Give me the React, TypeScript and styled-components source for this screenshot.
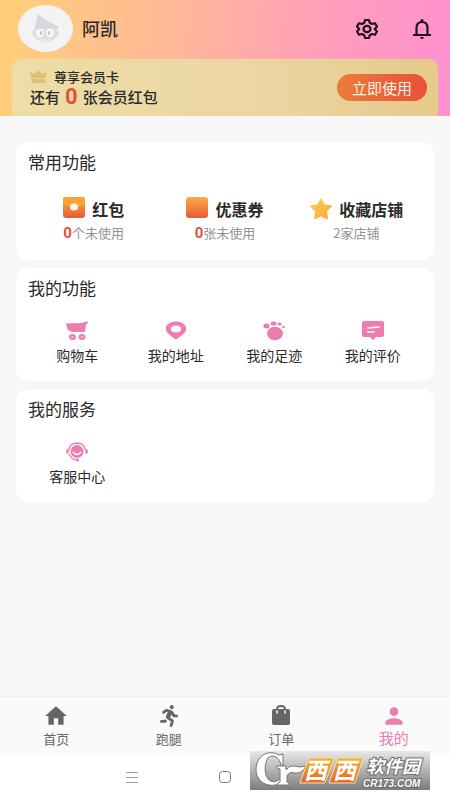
import React from "react";
import styled, { createGlobalStyle } from "styled-components";
import { MdHome, MdPerson } from "react-icons/md";
import { FaRunning } from "react-icons/fa";

const GlobalStyle = createGlobalStyle`
  * { box-sizing: border-box; }
  body {
    margin: 0;
    background: #fff;
    color: #2a2a2a;
    font-family: "Noto Sans CJK SC", sans-serif;
  }
  button { font: inherit; color: inherit; border: 0; padding: 0; background: none; cursor: pointer; }
  a { color: inherit; text-decoration: none; }
  h1, h2, p { margin: 0; font-weight: 400; }
  svg { display: block; flex: none; }
`;

const Page = styled.div`
  min-height: 100vh;
  display: flex;
  flex-direction: column;
  background: #f7f7f7;
`;

const Header = styled.header`
  padding: 0 12px;
  background: linear-gradient(97deg, #ffd078 0%, #ffb59b 42%, #ff9fba 70%, #ff90d0 100%);
`;

const Profile = styled.div`
  display: flex;
  align-items: center;
  height: 59px;
  padding: 0 6px 2px;
`;

const Avatar = styled.div`
  width: 55px;
  height: 47px;
  border-radius: 50%;
  background: #f3f2f4;
  display: flex;
  align-items: center;
  justify-content: center;
`;

const UserName = styled.h1`
  flex: 1;
  margin-left: 9px;
  padding-bottom: 2px;
  font-size: 18px;
  line-height: 24px;
  font-weight: 500;
`;

const HeaderActions = styled.div`
  display: flex;
  gap: 33px;
  color: #21111a;
`;

const MemberCard = styled.section`
  display: flex;
  align-items: center;
  justify-content: space-between;
  height: 57px;
  padding: 0 11px 0 18px;
  border-radius: 9px 9px 0 0;
  background: linear-gradient(90deg, #eddda6, #ecd6a4 55%, #e5ca8b);
`;

const MemberTitle = styled.p`
  display: flex;
  align-items: center;
  gap: 7px;
  font-size: 13px;
  line-height: 18px;
  font-weight: 500;
`;

const MemberText = styled.p`
  display: flex;
  align-items: center;
  gap: 5px;
  font-size: 15px;
  line-height: 22px;
  font-weight: 500;
`;

const Count = styled.strong<{ $size: number }>`
  color: #e2533b;
  font-family: Roboto, sans-serif;
  font-weight: 700;
  font-size: ${(p) => p.$size}px;
`;

const UseButton = styled.button`
  width: 90px;
  height: 27px;
  border-radius: 14px;
  background: linear-gradient(90deg, #e97c38, #e9503a);
  color: #fff3e6;
  font-size: 15px;
  line-height: 26px;
`;

const Main = styled.main`
  flex: 1;
  display: flex;
  flex-direction: column;
  gap: 8px;
  padding: 26px 16px;
`;

const Panel = styled.section`
  padding: 7px 12px 16px;
  border-radius: 12px;
  background: #fff;
`;

const PanelTitle = styled.h2`
  font-size: 17px;
  line-height: 26px;
`;

const AssetGrid = styled.div`
  display: grid;
  grid-template-columns: repeat(3, minmax(0, 132px));
  justify-content: center;
  padding: 19px 0 1px;
`;

const Asset = styled.button`
  display: flex;
  flex-direction: column;
  align-items: center;
`;

const AssetName = styled.span`
  display: flex;
  align-items: center;
  gap: 6px;
  height: 29px;
  font-size: 16px;
  font-weight: 700;
`;

const AssetNote = styled.span`
  display: flex;
  align-items: center;
  color: #929292;
  font-size: 13px;
  line-height: 20px;
`;

const ToolGrid = styled.div`
  display: grid;
  grid-template-columns: repeat(4, 1fr);
  padding-top: 19px;
`;

const Tool = styled.button`
  display: flex;
  flex-direction: column;
  align-items: center;
  gap: 3px;
  font-size: 14px;
  line-height: 20px;
`;

const TabBar = styled.nav`
  display: grid;
  grid-template-columns: repeat(4, 1fr);
  height: 58px;
  border-top: 1px solid #eee;
  background: #fafafa;
`;

const Tab = styled.a<{ $active?: boolean }>`
  display: flex;
  flex-direction: column;
  align-items: center;
  padding-top: 6px;
  color: ${(p) => (p.$active ? "#e87fb2" : "#666")};
  font-size: ${(p) => (p.$active ? 15 : 13)}px;
  line-height: ${(p) => (p.$active ? 18 : 20)}px;
`;

const TabIcon = styled.span`
  display: grid;
  place-items: center;
  height: 26px;
`;

const SystemBar = styled.footer`
  position: relative;
  display: flex;
  align-items: center;
  justify-content: center;
  gap: 79px;
  height: 46px;
  padding-right: 94px;
  background: #fff;
  color: #888;
`;

const Watermark = styled.div`
  position: absolute;
  right: 20px;
  bottom: 10px;
`;

const AvatarArt = () => (
  <svg width="34" height="34" viewBox="0 0 34 34">
    <path d="M5 19 9 2c4 3 8 7 21 13l-3 4q-10-5-22 0Z" fill="#d7d8dc" />
    <path d="M5 19q-3-1-2 3 1 3 3 3c2 6 17 7 21 0q3 0 3-4 0-3-3-2-11-6-22 0Z" fill="#dddee2" />
    <ellipse cx="11" cy="21" rx="4" ry="4.500" fill="#f7f7f8" />
    <ellipse cx="21" cy="21" rx="4" ry="4.500" fill="#f7f7f8" />
    <ellipse cx="12" cy="21" rx="1.300" ry="2" fill="#c6c7cc" />
    <ellipse cx="20" cy="21" rx="1.300" ry="2" fill="#c6c7cc" />
    <path d="M10 26q6 3 12 0l-2 4q-4 2-8 0Z" fill="#efe5e6" />
  </svg>
);

const GearIcon = () => (
  <svg width="24" height="22" viewBox="0 0 24 22" fill="none" stroke="currentColor" strokeWidth="2.200" strokeLinejoin="round">
    <path d="M10 2h4l.7 2.800 2.300 1.200 3-.8 2 3.300L19.800 11l2.200 2.500-2 3.300-3-.8-2.300 1.200L14 20h-4l-.7-2.800L7 16l-3 .8-2-3.300L4.200 11 2 8.500l2-3.300 3 .8 2.300-1.200Z" />
    <ellipse cx="12" cy="11" rx="3.500" ry="3.200" />
  </svg>
);

const BellIcon = () => (
  <svg width="20" height="22" viewBox="0 0 20 22">
    <path d="M4.500 17V10q0-6 5.500-6t5.500 6v7M1 17h18" fill="none" stroke="currentColor" strokeWidth="2.200" />
    <path d="M8.500 3.500V2q1.500-2 3 0v1.500ZM8 19h4q-.5 2-2 2t-2-2" fill="currentColor" />
  </svg>
);

const CrownIcon = () => (
  <svg width="17" height="15" viewBox="0 0 17 15" fill="#dfc071">
    <path d="M0 3 5 5 8.500 1 12 5l5-2-1.500 6h-14ZM1.500 10h14l-.5 4H2Z" />
  </svg>
);

const PacketIcon = ({ dot }: { dot?: boolean }) => (
  <svg width="23" height="23" viewBox="0 0 23 23">
    <defs>
      <linearGradient id="packet" x2="0" y2="1">
        <stop stopColor="#faae45" />
        <stop offset="1" stopColor="#ea5936" />
      </linearGradient>
    </defs>
    <rect width="22" height="21" rx="3" fill="url(#packet)" />
    {dot && <path d="M0 7V3q0-3 3-3h16q3 0 3 3v4q-11 7-22 0" fill="#f9a334" />}
    {dot && <ellipse cx="11" cy="10" rx="4" ry="3.500" fill="#fff6e8" />}
  </svg>
);

const StarIcon = () => (
  <svg width="24" height="24" viewBox="0 0 24 24">
    <defs>
      <linearGradient id="star" x2="1" y2="1">
        <stop stopColor="#ffd25c" />
        <stop offset="1" stopColor="#f8a532" />
      </linearGradient>
    </defs>
    <path d="m12 2 3.200 6 7 1-5 5.300 1 7.200-6.200-3-6.200 3 1-7.200-5-5.300 7-1Z" fill="url(#star)" stroke="url(#star)" strokeWidth="1.500" strokeLinejoin="round" />
  </svg>
);

const pink = "#ed7db0";

const CartIcon = () => (
  <svg width="24" height="22" viewBox="0 0 24 22">
    <path d="M1 3.500 18 3q1-1.500 5-1.500V3l-2 1-1 8H8Q3 11 2 8Z" fill={pink} />
    <g fill="#f5bad5" stroke={pink} strokeWidth="2">
      <ellipse cx="7.500" cy="17" rx="2.500" ry="2" />
      <ellipse cx="17" cy="17" rx="2.500" ry="2" />
    </g>
  </svg>
);

const PlaceIcon = () => (
  <svg width="24" height="22" viewBox="0 0 24 22">
    <path fillRule="evenodd" d="M12 1.500c7 0 11 4 10 8-1 5-6 7-10 10-4-3-9-5-10-10-1-4 3-8 10-8Zm0 4c-3 0-5 1.500-5 3.500S9 12.500 12 12.500s5-1.500 5-3.500S15 5.500 12 5.500Z" fill={pink} />
  </svg>
);

const PawIcon = () => (
  <svg width="24" height="22" viewBox="0 0 24 22" fill={pink}>
    <ellipse cx="13" cy="13.500" rx="8" ry="6.700" />
    <ellipse cx="4.500" cy="6" rx="3.200" ry="2.500" />
    <ellipse cx="11.500" cy="3.500" rx="3" ry="2" />
    <ellipse cx="17.500" cy="4" rx="2.200" ry="1.500" />
    <circle cx="21.500" cy="7" r="1.300" />
  </svg>
);

const CommentIcon = () => (
  <svg width="24" height="22" viewBox="0 0 24 22">
    <path d="M3 1h18q2 0 2 2v12q0 2-2 2h-6l-3 3-3-3H3q-2 0-2-2V3q0-2 2-2Z" fill={pink} />
    <path d="m7 8 11-1M7 12h6" stroke="#fff" strokeWidth="1.700" strokeLinecap="round" />
  </svg>
);

const ServiceIcon = () => (
  <svg width="24" height="22" viewBox="0 0 24 22" fill="none" stroke={pink}>
    <circle cx="12" cy="10.500" r="6.500" fill={pink} stroke="none" />
    <path d="M3.500 9Q5 2 12 2t8.500 7M4 13q3 6 8 6" strokeWidth="1.300" />
    <path d="M2.500 9.500v2m19-2v2" strokeWidth="2.500" strokeLinecap="round" />
    <path d="M8 11q4 5 8 0" stroke="#fff" strokeWidth="1.300" />
    <circle cx="12.500" cy="19" r="1.500" fill={pink} stroke="none" />
  </svg>
);

const BagIcon = () => (
  <svg width="24" height="26" viewBox="0 0 24 26">
    <path d="M8 8V6q0-3 4-3t4 3v2" fill="none" stroke="currentColor" strokeWidth="2" />
    <rect x="3" y="6" width="18" height="16" rx="2" fill="currentColor" />
    <path d="M8 8v2m8-2v2" stroke="#fafafa" strokeWidth="1.500" strokeLinecap="round" />
  </svg>
);

const MenuIcon = () => (
  <svg width="14" height="14" viewBox="0 0 14 14" stroke="#999">
    <path d="M1 2.500h12M1 7.500h12M1 12.500h12" />
  </svg>
);

const SquareIcon = () => (
  <svg width="14" height="14" viewBox="0 0 14 14" fill="none" stroke="#777">
    <rect x="1.500" y="1.500" width="11" height="11" rx="3" />
  </svg>
);

const SiteLogo = () => (
  <svg width="180" height="39" viewBox="0 0 180 39" role="img" aria-label="西西软件园 CR173.COM">
    <defs>
      <linearGradient id="plate" x2="0" y2="1">
        <stop stopColor="#e8e8e8" />
        <stop offset="1" stopColor="#7c7c7c" />
      </linearGradient>
      <linearGradient id="tile" x2="0" y2="1">
        <stop stopColor="#f6b026" />
        <stop offset="1" stopColor="#e86525" />
      </linearGradient>
    </defs>
    <rect width="180" height="39" fill="url(#plate)" />
    <g fill="#fff" stroke="#777" strokeWidth="1" strokeLinejoin="round">
      <path d="M33 3v11h-2C29 5 22 3 18 7c-4 6-4 17 1 22 4 3 8 2 12-2l3 2C27 38 7 36 6 19 6 4 19-2 29 4Z" />
      <path d="M27 15h9v4q3-5 8-4 5 2 12 0-4 8-11 7-6-2-8 3v6l3 2v1H27v-1l3-2V18l-3-1Z" />
    </g>
    <path d="M59 7h25l-9 25H50ZM88 7h25l-8 25H79Z" fill="url(#tile)" stroke="#f9dfb0" />
    <g fontFamily="Noto Sans CJK SC, sans-serif" fontWeight="700" fontStyle="italic" fill="#fff">
      <text x="54" y="28" fontSize="23">西</text>
      <text x="83" y="28" fontSize="23">西</text>
      <g stroke="#6c6c6c" strokeWidth="2" paintOrder="stroke">
        <text x="116" y="22" fontSize="18">软件园</text>
        <text x="113" y="36" fontSize="10" fontFamily="Liberation Sans, sans-serif">CR173.COM</text>
      </g>
    </g>
  </svg>
);

const tools = [
  { name: "购物车", icon: <CartIcon /> },
  { name: "我的地址", icon: <PlaceIcon /> },
  { name: "我的足迹", icon: <PawIcon /> },
  { name: "我的评价", icon: <CommentIcon /> },
];

export default function App() {
  return (
    <Page>
      <GlobalStyle />
      <Header>
        <Profile>
          <Avatar><AvatarArt /></Avatar>
          <UserName>阿凯</UserName>
          <HeaderActions>
            <button aria-label="设置"><GearIcon /></button>
            <button aria-label="通知"><BellIcon /></button>
          </HeaderActions>
        </Profile>
        <MemberCard>
          <div>
            <MemberTitle><CrownIcon />尊享会员卡</MemberTitle>
            <MemberText>还有<Count $size={22}>0</Count>张会员红包</MemberText>
          </div>
          <UseButton>立即使用</UseButton>
        </MemberCard>
      </Header>
      <Main>
        <Panel>
          <PanelTitle>常用功能</PanelTitle>
          <AssetGrid>
            <Asset>
              <AssetName><PacketIcon dot />红包</AssetName>
              <AssetNote><Count $size={15}>0</Count>个未使用</AssetNote>
            </Asset>
            <Asset>
              <AssetName><PacketIcon />优惠券</AssetName>
              <AssetNote><Count $size={15}>0</Count>张未使用</AssetNote>
            </Asset>
            <Asset>
              <AssetName><StarIcon />收藏店铺</AssetName>
              <AssetNote>2家店铺</AssetNote>
            </Asset>
          </AssetGrid>
        </Panel>
        <Panel>
          <PanelTitle>我的功能</PanelTitle>
          <ToolGrid>
            {tools.map((t) => <Tool key={t.name}>{t.icon}{t.name}</Tool>)}
          </ToolGrid>
        </Panel>
        <Panel>
          <PanelTitle>我的服务</PanelTitle>
          <ToolGrid>
            <Tool><ServiceIcon />客服中心</Tool>
          </ToolGrid>
        </Panel>
      </Main>
      <TabBar>
        <Tab href="#home"><TabIcon><MdHome size={26} /></TabIcon>首页</Tab>
        <Tab href="#run"><TabIcon><FaRunning size={22} /></TabIcon>跑腿</Tab>
        <Tab href="#orders"><TabIcon><BagIcon /></TabIcon>订单</Tab>
        <Tab href="#me" $active><TabIcon><MdPerson size={26} /></TabIcon>我的</Tab>
      </TabBar>
      <SystemBar>
        <button aria-label="菜单"><MenuIcon /></button>
        <button aria-label="主屏幕"><SquareIcon /></button>
        <Watermark><SiteLogo /></Watermark>
      </SystemBar>
    </Page>
  );
}
